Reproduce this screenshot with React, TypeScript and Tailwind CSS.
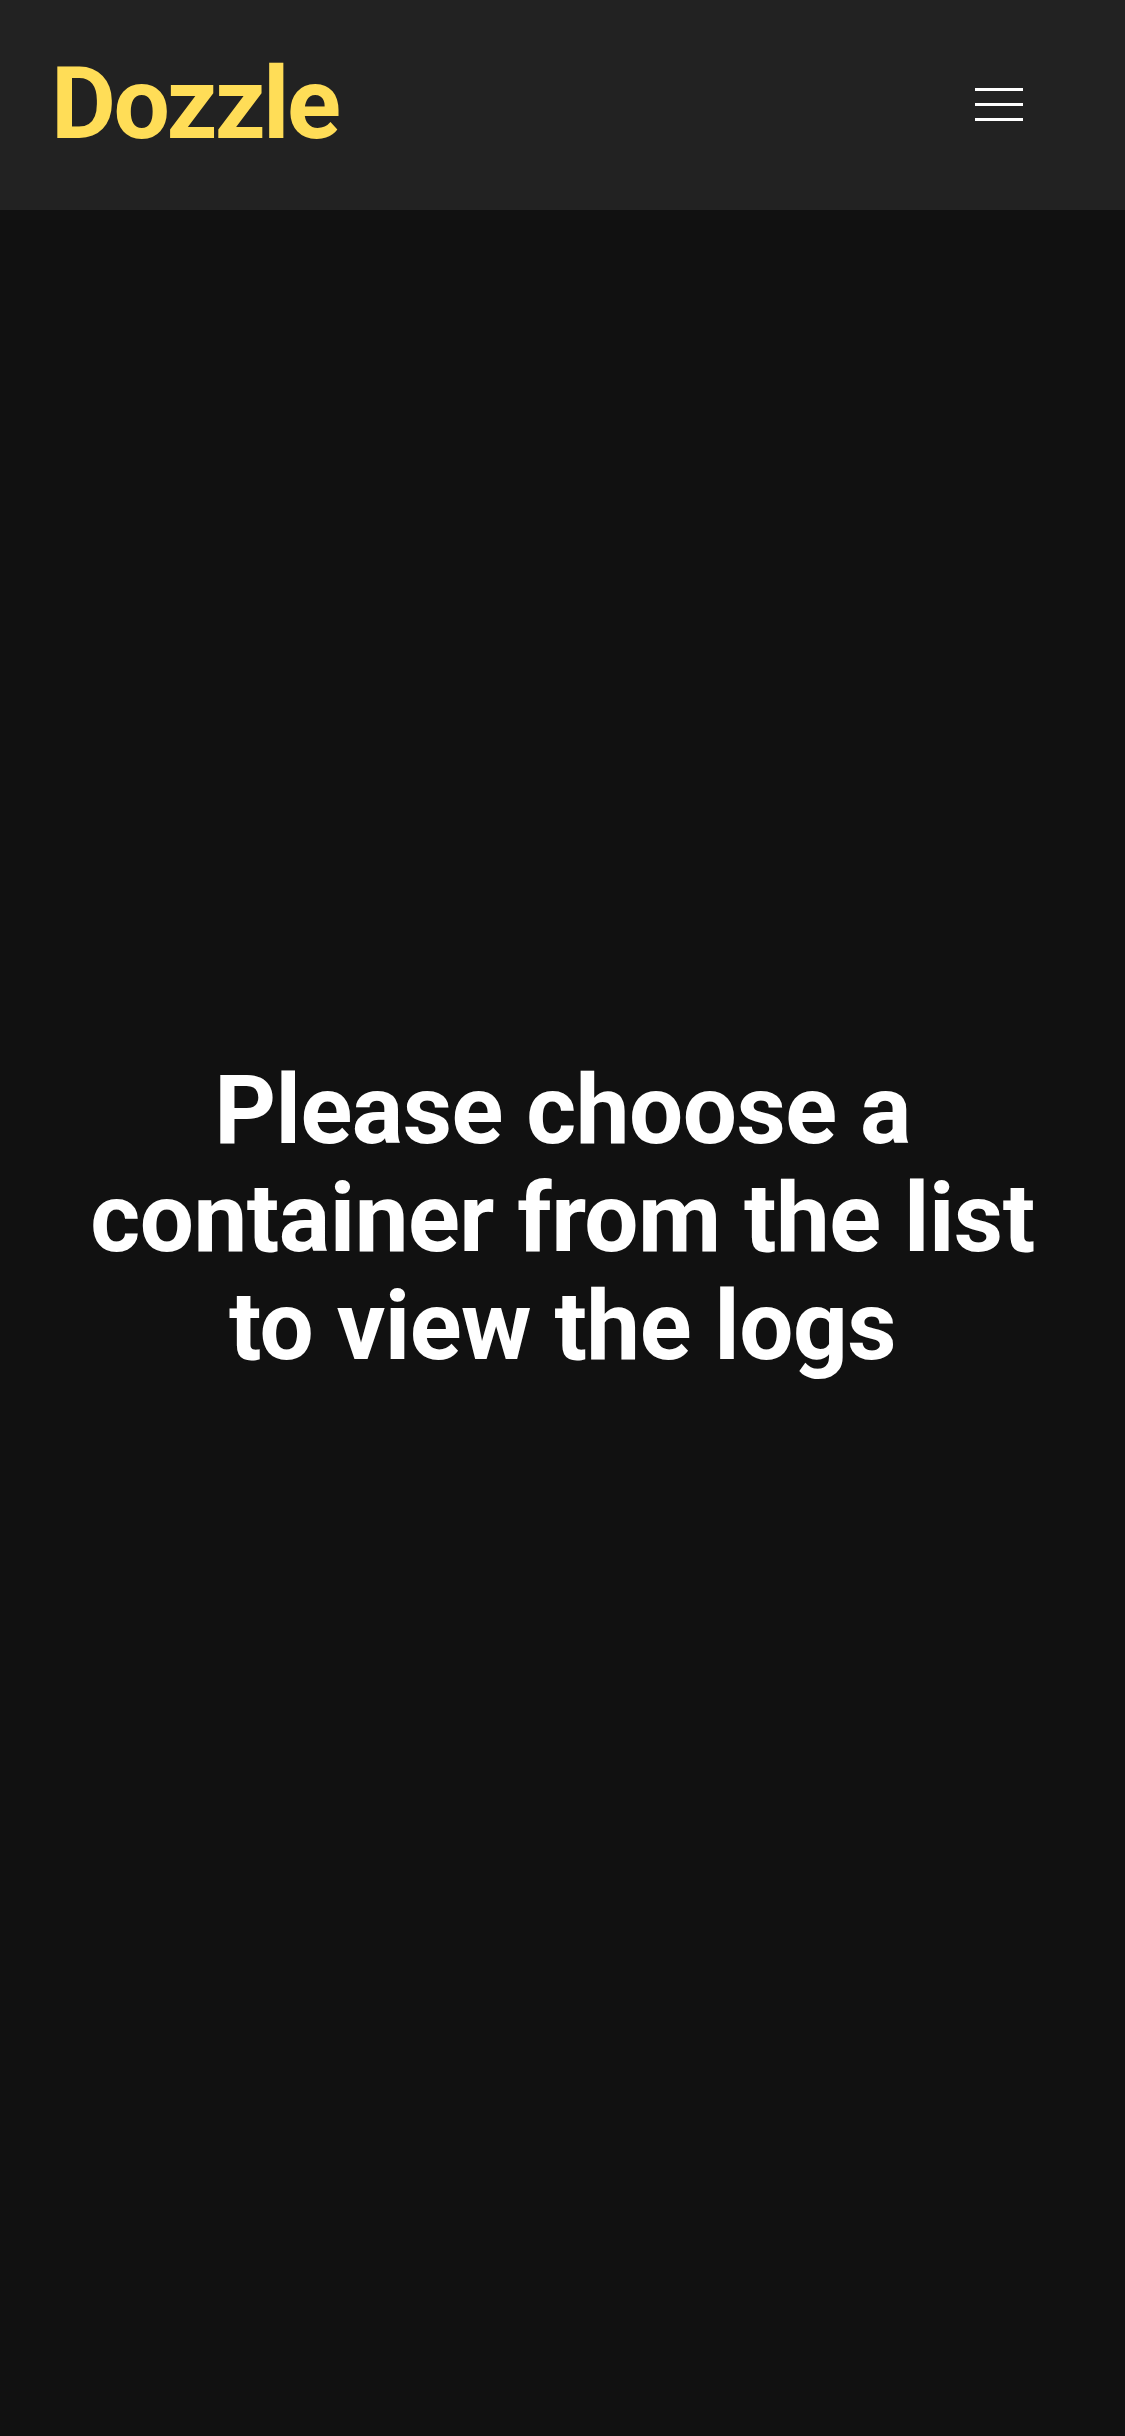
import React from "react";

export default function App() {
  return (
    <div className="min-h-[2436px] w-full bg-[#111111]" style={{ fontFamily: "Roboto, 'Liberation Sans', sans-serif" }}>
      <header className="flex h-[210px] items-center justify-between bg-[#222222] pl-[51px] pr-[102px]">
        <h1 className="text-[100px] font-bold leading-none tracking-[-2.6px] text-[#ffdd57] pb-[2px]">Dozzle</h1>
        <button className="flex w-[48px] flex-col gap-[12px] pb-[2px]" aria-label="menu">
          <span className="block h-[3px] w-full bg-white" />
          <span className="block h-[3px] w-full bg-white" />
          <span className="block h-[3px] w-full bg-white" />
        </button>
      </header>
      <main className="flex flex-col items-center px-[48px] pt-[846px]">
        <h2 className="text-center text-[96px] font-bold leading-[108px] tracking-[-0.5px] text-white">
          Please choose a container from the list to view the logs
        </h2>
      </main>
    </div>
  );
}
